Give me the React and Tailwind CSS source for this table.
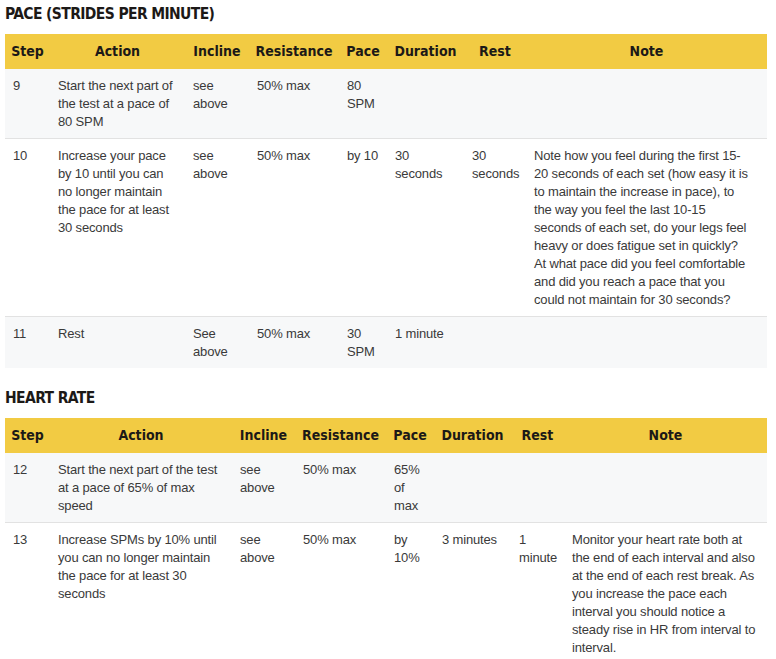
import React from "react";

const heads = ["Step", "Action", "Incline", "Resistance", "Pace", "Duration", "Rest", "Note"];

const paceCols = [45, 135, 64, 90, 48, 77, 62, 241];
const heartCols = [45, 182, 63, 91, 48, 77, 53, 203];

const paceRows = [
    ["9", "Start the next part of the test at a pace of 80 SPM", "see above", "50% max", "80 SPM", "", "", ""],
    [
        "10",
        "Increase your pace by 10 until you can no longer maintain the pace for at least 30 seconds",
        "see above",
        "50% max",
        "by 10",
        "30 seconds",
        "30 seconds",
        "Note how you feel during the first 15-20 seconds of each set (how easy it is to maintain the increase in pace), to the way you feel the last 10-15 seconds of each set, do your legs feel heavy or does fatigue set in quickly? At what pace did you feel comfortable and did you reach a pace that you could not maintain for 30 seconds?",
    ],
    ["11", "Rest", "See above", "50% max", "30 SPM", "1 minute", "", ""],
];

const heartRows = [
    ["12", "Start the next part of the test at a pace of 65% of max speed", "see above", "50% max", "65% of max", "", "", ""],
    [
        "13",
        "Increase SPMs by 10% until you can no longer maintain the pace for at least 30 seconds",
        "see above",
        "50% max",
        "by 10%",
        "3 minutes",
        "1 minute",
        "Monitor your heart rate both at the end of each interval and also at the end of each rest break. As you increase the pace each interval you should notice a steady rise in HR from interval to interval.",
    ],
];

const Heading = ({children}) => (
    <h2 className="font-['DejaVu_Sans_Condensed','DejaVu_Sans',sans-serif] font-stretch-condensed font-bold text-[15.5px] leading-5 text-[#1c1917] tracking-[-0.04em] pt-[4px] pb-[10px]">
        {children}
    </h2>
);

// noteInset: extra right padding on the note column (the pace table wraps tighter)
const WorkoutTable = ({cols, rows, noteInset = false}) => (
    <table className="table-fixed border-collapse w-[762px]">
        <colgroup>
            {cols.map((w, i) => (
                <col key={i} style={{width: w}}/>
            ))}
        </colgroup>
        <thead>
            <tr className="bg-[#f2cb43]">
                {heads.map((h) => (
                    <th
                        key={h}
                        className="h-[35px] px-1 text-center align-middle font-['DejaVu_Sans_Condensed','DejaVu_Sans',sans-serif] font-stretch-condensed font-bold text-[14px] text-[#1c1917] whitespace-nowrap"
                    >
                        {h}
                    </th>
                ))}
            </tr>
        </thead>
        <tbody>
            {rows.map((r, i) => (
                <tr
                    key={r[0]}
                    className={`${i % 2 === 0 ? "bg-[#f7f8f9]" : "bg-white"} ${i < rows.length - 1 ? "border-b border-[#e2e2e2]" : ""}`}
                >
                    {r.map((c, j) => (
                        <td
                            key={j}
                            className={`align-top pl-2 ${noteInset && j === 7 ? "pr-[16px]" : "pr-[6px]"} pt-[8px] pb-[7px] text-[13px] tracking-[-0.012em] leading-[18px] text-[#3a3a3a] font-['Liberation_Sans',Arial,sans-serif]`}
                        >
                            {c}
                        </td>
                    ))}
                </tr>
            ))}
        </tbody>
    </table>
);

export default function App() {
    return (
        <div className="bg-white w-[776px] min-h-[659px] pl-[5px]">
            <section>
                <Heading>PACE (STRIDES PER MINUTE)</Heading>
                <WorkoutTable cols={paceCols} rows={paceRows} noteInset/>
            </section>
            <section className="mt-[16px]">
                <Heading>HEART RATE</Heading>
                <WorkoutTable cols={heartCols} rows={heartRows}/>
            </section>
        </div>
    );
}
